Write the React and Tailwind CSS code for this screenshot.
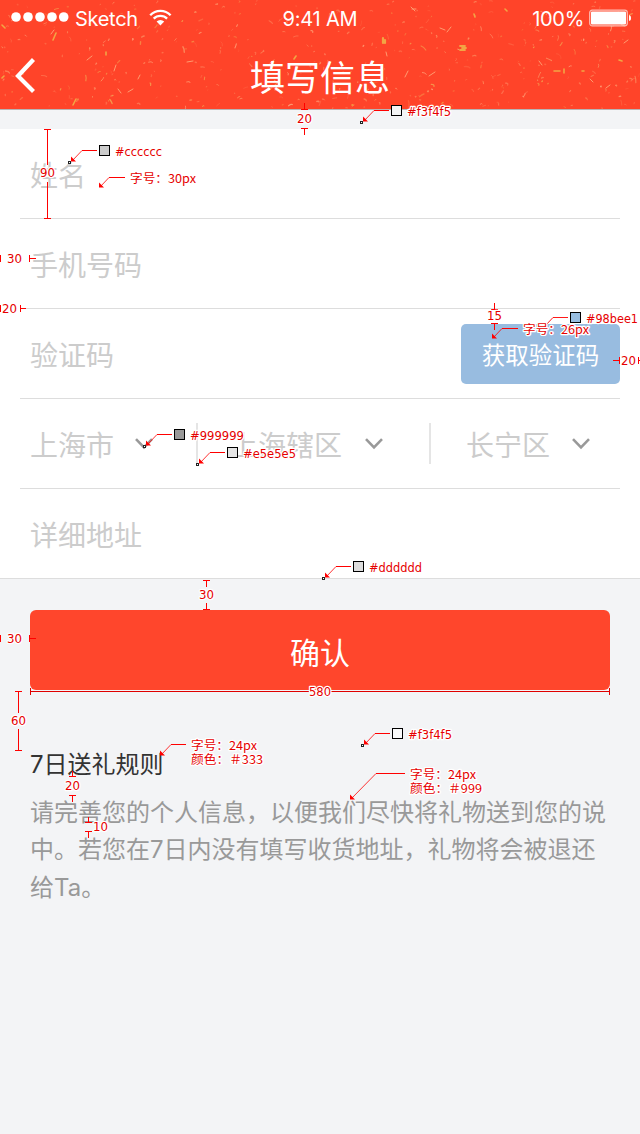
import React from "react";

const cjk = "font-['Noto_Sans_CJK_SC',sans-serif]";

/* Small deterministic generator so the paper texture is the same on each render. */
function makeFlecks(count) {
  let s = 20177;
  const rnd = () => {
    s = (s * 16807) % 2147483647;
    return s / 2147483647;
  };
  const tones = ["#ff7a55", "#ff8f62", "#fb9a68", "#ff6a48", "#ffa67c", "#f3a552"];
  const out = [];
  for (let i = 0; i < count; i++) {
    const x = rnd() * 640;
    const y = rnd() * 108;
    const a = rnd() * Math.PI;
    const l = 0.6 + rnd() * rnd() * 6;
    const dx = Math.cos(a) * l;
    const dy = Math.sin(a) * l;
    out.push({
      d: `M${x.toFixed(1)} ${y.toFixed(1)}q${(dx / 2 + rnd() * 1.5).toFixed(1)} ${(dy / 2 - rnd() * 1.5).toFixed(1)} ${dx.toFixed(1)} ${dy.toFixed(1)}`,
      c: tones[Math.floor(rnd() * tones.length)],
      w: 0.6 + rnd() * 0.8,
      o: 0.35 + rnd() * 0.5,
    });
  }
  return out;
}
const flecks = makeFlecks(430);

function Texture() {
  return (
    <svg className="absolute inset-0" width="640" height="109" viewBox="0 0 640 109" fill="none" strokeLinecap="round">
      {flecks.map((f, i) => (
        <path key={i} d={f.d} stroke={f.c} strokeWidth={f.w} opacity={f.o} />
      ))}
      <g stroke="#f2a544" strokeWidth="1.6">
        <path d="M383 38v5M385 40v3" strokeWidth="2.2" />
        <path d="M460 46h5M460 50h5M462 48h4" strokeWidth="1.8" />
        <path d="M106 52v3M53 40l3-7M2 78l2-2M2 25l3 3M37 17l2-2M474 14l1 3M505 9l2 2M554 71h6M564 69v4M582 71h2M619 60l3 1M296 56l-2 3M352 105h1M76 99l-3 6" />
      </g>
      <g stroke="#ff9c70" strokeWidth="1">
        <path d="M87 60l5-4M54 30l-3 4M116 65l-2 6M118 89l3 4M128 92l5-3M138 79l2-4M187 62l6-1M270 63l4-3M412 9h4M411 7l4 4M440 28l5 2M451 27l-4 5M435 72l-6 4M408 71l-3 6M386 52l1 4M539 61l3 4M624 43l4-3M606 88l4-3M590 79l3 3" />
      </g>
    </svg>
  );
}

function StatusBar() {
  return (
    <div className="relative grid h-10 grid-cols-3 text-white font-[Inter,sans-serif]">
      <div className="flex h-[36px] items-center pl-[11px]">
        <svg width="59" height="12" viewBox="0 0 59 12" fill="#fff" className="mb-[2px]">
          <circle cx="5" cy="6" r="4.8" />
          <circle cx="17" cy="6" r="4.8" />
          <circle cx="29" cy="6" r="4.8" />
          <circle cx="41" cy="6" r="4.8" />
          <circle cx="52.7" cy="6" r="4.8" />
        </svg>
        <span className="ml-[5px] w-[74px] text-[20px] leading-[24px] tracking-[-0.3px] mt-[2px]">Sketch</span>
        <svg width="23" height="17" viewBox="0 0 23 17" fill="none" stroke="#fff" strokeWidth="2.3" className="mb-[2px]">
          <path d="M1.2 6.2a14 14 0 0 1 20.4 0" />
          <path d="M4.7 9.6a9.4 9.4 0 0 1 13.4 0" />
          <path d="M11.4 16.4L7.6 12.6a5.4 5.4 0 0 1 7.6 0z" fill="#fff" stroke="none" />
        </svg>
      </div>
      <div className="mt-[2px] flex h-[34px] items-center justify-center text-[20px] tracking-[-0.2px]">9:41 AM</div>
      <div className="flex h-[36px] items-center justify-end pr-[8px]">
        <span className="mr-[5px] mt-[2px] text-[20px] leading-[24px] tracking-[-0.3px]">100%</span>
        <svg width="43" height="18" viewBox="0 0 43 18" fill="none" className="mb-[1px]">
          <rect x="0.7" y="1.2" width="37.6" height="15.6" rx="2.5" stroke="#fff" strokeOpacity=".65" strokeWidth="1.2" />
          <rect x="2" y="2.6" width="35" height="12.8" rx="1" fill="#fff" />
          <path d="M40 6.2h.8q1.2.4 1.2 2.8t-1.2 2.8H40z" fill="#fff" />
        </svg>
      </div>
    </div>
  );
}

function Header() {
  return (
    <header className="relative h-[110px] overflow-hidden border-b border-[#b8b4b4] bg-[#ff4429]">
      <Texture />
      <StatusBar />
      <div className="relative grid h-[72px] grid-cols-[64px_1fr_64px] items-center text-white">
        <svg width="24" height="36" viewBox="0 0 24 36" fill="none" stroke="#fff" strokeWidth="4.2" className="ml-[13px]">
          <path d="M20.5 1.5L5 18l15.500 15.500" />
        </svg>
        <h1 className="text-center text-[35px] leading-[50px]">填写信息</h1>
      </div>
    </header>
  );
}

function Chevron() {
  return (
    <svg width="18" height="12" viewBox="0 0 18 12" fill="none" stroke="#999" strokeWidth="2.6">
      <path d="M1 1.200L9 9.300L17 1.200" />
    </svg>
  );
}

function Row({ children }) {
  return <div className="mx-5 flex h-[90px] items-center border-b border-[#ddd] px-[10px]">{children}</div>;
}

/* ---- Redline annotations ---- */

function Note({ x, y, w, children, zh }) {
  return (
    <text
      x={x}
      y={y}
      textLength={w}
      lengthAdjust="spacingAndGlyphs"
      className={zh ? "font-['Noto_Sans_CJK_SC',sans-serif] text-[12px]" : "font-['DejaVu_Sans',sans-serif] text-[12px]"}
      fill="#e60000"
      stroke="#fff"
      strokeWidth="2.5"
      strokeLinejoin="round"
      paintOrder="stroke"
    >
      {children}
    </text>
  );
}

/* Leader: horizontal run, then a diagonal down to the arrow tip at (x, y). */
function Leader({ x, y, h = 12, end }) {
  return (
    <g>
      <path d={`M${end} ${y - h + 0.5}H${x + h}`} stroke="#f00" />
      <path d={`M${x + h} ${y - h + 0.5}L${x + 1} ${y}`} stroke="#f00" strokeWidth="0.8" />
      <path d={`M${x} ${y + 0.5}v-5l5 5z`} fill="#f00" />
    </g>
  );
}

function Swatch({ x, y, fill, tx, ty }) {
  return (
    <g>
      <rect x={x + 0.5} y={y + 0.5} width="10" height="10" fill={fill} stroke="#000" />
      {tx && <rect x={tx - 1} y={ty - 1} width="2" height="2" fill="#fff" stroke="#222" />}
    </g>
  );
}

function Redlines() {
  return (
    <svg className="pointer-events-none absolute inset-0" width="640" height="1134" viewBox="0 0 640 1134" fill="none">
      <g stroke="#f00">
        <path d="M304.500 103v6M301 109.500h7M301 128.500h7M304.500 129v6" />
        <path d="M44 129.500h7M47.500 129v36M47.500 182v36M44 218.500h7" />
        <path d="M.5 255v7M29.500 255v7M30 258.500h6" />
        <path d="M.5 305v7M20.500 305v7M20 308.500h6" />
        <path d="M494.500 303v6M491 309.500h7M491 323.500h7M494.500 324v6" />
        <path d="M613 360.500h6M619.500 357v7M638.500 357v7M638 360.500h2" />
        <path d="M203 580.500h7M206.500 580v7M206.500 603v6M203 609.500h7" />
        <path d="M.5 635v7M29.500 635v7M30 638.500h6" />
        <path d="M30.500 688v7M609.500 688v7M30 691.500H309M331 691.500H610" stroke="#e00000" />
        <path d="M15 691.500h7M18.500 691v22M18.500 729v21M15 750.500h7" />
        <path d="M72.500 771v6M69 776.500h7M69 795.500h7M72.500 796v6" />
        <path d="M88.500 817v6M85 822.500h7M85 831.500h7M88.500 832v6" />
      </g>

      <Leader x={363} y={121} h={11} end={389} />
      <Swatch x={391} y={105} fill="#f3f4f5" tx={361.500} ty={122.500} />
      <Leader x={71} y={161} h={11} end={97} />
      <Swatch x={99} y={145} fill="#cccccc" tx={69.500} ty={162.500} />
      <Leader x={99} y={187} h={10} end={125} />
      <Leader x={146} y={445} h={11} end={172} />
      <Swatch x={174} y={429} fill="#999999" tx={144.500} ty={446.500} />
      <Leader x={199} y={463} h={11} end={225} />
      <Swatch x={227} y={447} fill="#e5e5e5" tx={197.500} ty={464.500} />
      <Leader x={325} y={577} h={11} end={351} />
      <Swatch x={353} y={561} fill="#dddddd" tx={323.500} ty={578.500} />
      <Leader x={364} y={744} h={11} end={390} />
      <Swatch x={392} y={728} fill="#f9fafb" tx={362.500} ty={745.500} />
      <path d="M568 317.500H553L545 326" stroke="#f00" strokeWidth="0.9" />
      <Swatch x={570} y={312} fill="#98bee1" />
      <Leader x={492} y={338} h={10} end={518} />
      <Leader x={160} y={755} h={11} end={186} />
      <Leader x={350} y={799} h={26} end={405} />

      <Note x={297} y={123} w={15}>20</Note>
      <Note x={407} y={116} w={44}>#f3f4f5</Note>
      <Note x={115} y={156} w={47}>#cccccc</Note>
      <Note x={130} y={183} w={66} zh>字号：30px</Note>
      <Note x={40} y={177} w={15}>90</Note>
      <Note x={7} y={263} w={15}>30</Note>
      <Note x={2} y={313} w={15}>20</Note>
      <Note x={487} y={320} w={15}>15</Note>
      <Note x={586} y={323} w={52}>#98bee1</Note>
      <Note x={523} y={334} w={66} zh>字号：26px</Note>
      <Note x={621} y={365} w={15}>20</Note>
      <Note x={190} y={440} w={54}>#999999</Note>
      <Note x={243} y={458} w={53}>#e5e5e5</Note>
      <Note x={369} y={572} w={53}>#dddddd</Note>
      <Note x={199} y={599} w={15}>30</Note>
      <Note x={7} y={643} w={15}>30</Note>
      <Note x={309} y={696} w={22}>580</Note>
      <Note x={11} y={725} w={15}>60</Note>
      <Note x={408} y={739} w={44}>#f3f4f5</Note>
      <Note x={191} y={750} w={66} zh>字号：24px</Note>
      <Note x={191} y={764} w={72} zh>颜色：＃333</Note>
      <Note x={410} y={779} w={66} zh>字号：24px</Note>
      <Note x={410} y={793} w={72} zh>颜色：＃999</Note>
      <Note x={65} y={790} w={15}>20</Note>
      <Note x={93} y={831} w={15}>10</Note>
    </svg>
  );
}

export default function App() {
  return (
    <div className={`relative h-[1134px] w-[640px] overflow-hidden bg-[#f3f4f6] ${cjk}`} lang="zh-CN">
      <Header />

      <section className="mt-[19px] border-b border-[#ddd] bg-white text-[28px] leading-[40px] text-[#ccc]">
        <Row>姓名</Row>
        <Row>手机号码</Row>
        <div className="mx-5 flex h-[90px] justify-between border-b border-[#ddd] pl-[10px]">
          <span className="self-center">验证码</span>
          <button className="mt-[15px] h-[60px] w-[159px] rounded-[5px] bg-[#98bce0] text-[23.500px] text-white">获取验证码</button>
        </div>
        <Row>
          <span className="w-[105px]">上海市</span>
          <Chevron />
          <i className="ml-[43px] h-[41px] w-[2px] bg-[#e5e5e5]" />
          <span className="ml-[32px] w-[135px]">上海辖区</span>
          <Chevron />
          <i className="ml-[46px] h-[41px] w-[2px] bg-[#e5e5e5]" />
          <span className="ml-[35px] w-[106px]">长宁区</span>
          <Chevron />
        </Row>
        <div className="flex h-[89px] items-center px-[30px]">详细地址</div>
      </section>

      <main className="px-[30px] pt-[31px]">
        <button className="block h-20 w-full rounded-[6px] bg-[#ff462c] pt-[2px] text-[30px] text-white">确认</button>
        <h2 className="mt-[55px] text-[24px] leading-[36px] text-[#333]">
          <span className="font-[Inter,sans-serif]">7</span>日送礼规则
        </h2>
        <p className="mt-[10px] whitespace-nowrap text-[24px] leading-[36.500px] text-[#999]">
          请完善您的个人信息，以便我们尽快将礼物送到您的说
          <br />
          中。若您在<span className="font-[Inter,sans-serif]">7</span>日内没有填写收货地址，礼物将会被退还
          <br />
          给<span className="font-[Inter,sans-serif]">Ta</span>。
        </p>
      </main>

      <Redlines />
    </div>
  );
}
